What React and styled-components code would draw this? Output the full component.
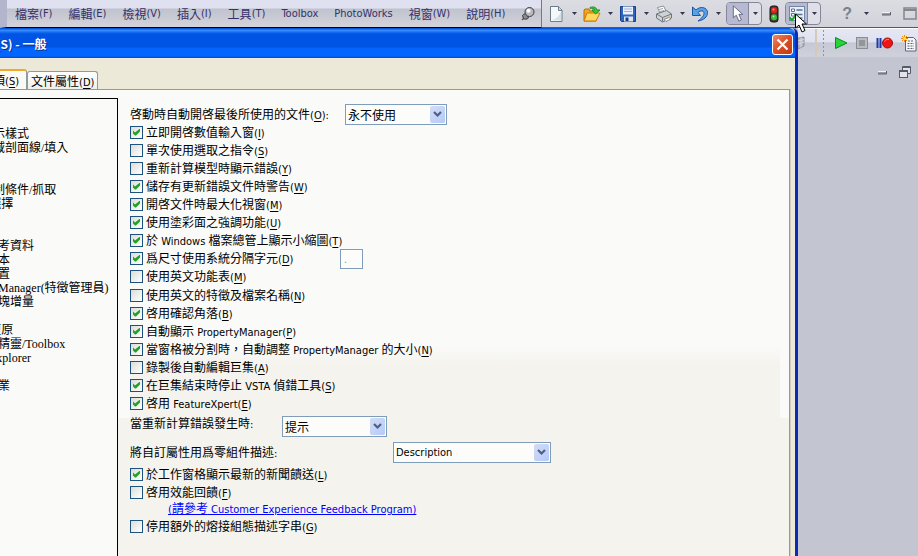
import React from 'react';
import styled, { createGlobalStyle, css } from 'styled-components';

// data
const MENUS = [
	'檔案(F)',
	'編輯(E)',
	'檢視(V)',
	'插入(I)',
	'工具(T)',
	'Toolbox',
	'PhotoWorks',
	'視窗(W)',
	'說明(H)',
];

const PAGES = [
	{ name: '一般' },
	{ name: '工程圖' },
	{ name: '顯示樣式', sub: true },
	{ name: '區域剖面線/填入', sub: true },
	{ name: '色彩' },
	{ name: '草圖' },
	{ name: '限制條件/抓取', sub: true },
	{ name: '顯示/選擇' },
	{ name: '效能' },
	{ name: '組合件' },
	{ name: '外部參考資料' },
	{ name: '預設範本' },
	{ name: '檔案位置' },
	{ name: 'FeatureManager(特徵管理員)' },
	{ name: '微調方塊增量' },
	{ name: '視角' },
	{ name: '備份/復原' },
	{ name: '異型孔精靈/Toolbox' },
	{ name: '檔案 Explorer' },
	{ name: '搜尋' },
	{ name: '協同作業' },
];

// & marks the access key
const STARTUP_CHECKS = [
	{ id: 'input-dim', text: '立即開啓數值輸入窗(&I)', on: true },
	{ id: 'single-cmd', text: '單次使用選取之指令(&S)' },
	{ id: 'rebuild-err', text: '重新計算模型時顯示錯誤(&Y)' },
	{ id: 'save-warn', text: '儲存有更新錯誤文件時警告(&W)', on: true },
	{ id: 'maximize', text: '開啓文件時最大化視窗(&M)', on: true },
	{ id: 'shaded', text: '使用塗彩面之強調功能(&U)', on: true },
	{ id: 'thumbs', text: '於 Windows 檔案總管上顯示小縮圖(&T)', on: true },
];

const LANGUAGE_CHECKS = [
	{ id: 'en-names', text: '使用英文的特徵及檔案名稱(&N)' },
	{ id: 'corner', text: '啓用確認角落(&B)', on: true },
	{ id: 'auto-pm', text: '自動顯示 PropertyManager(&P)', on: true },
	{
		id: 'size-pm',
		text: '當窗格被分割時，自動調整 PropertyManager 的大小(&N)',
		on: true,
	},
	{ id: 'edit-macro', text: '錄製後自動編輯巨集(&A)' },
	{ id: 'vsta', text: '在巨集結束時停止 VSTA 偵錯工具(&S)', on: true },
	{ id: 'xpert', text: '啓用 FeatureXpert(&E)', on: true },
];

// splits a caption into chinese text, latin text and the underlined access key
const Caption = ({ text }) =>
	text
		.split(/(&[A-Z]|[\x20-\x25\x27-\x7e]+)/)
		.filter(Boolean)
		.map((part, i) => {
			if (part[0] === '&') {
				return <Key key={i}>{part[1]}</Key>;
			}
			return /^[\x20-\x7e]/.test(part) ? <Latin key={i}>{part}</Latin> : part;
		});

const Check = ({ id, text, on }) => (
	<CheckRow>
		<CheckBox id={id} defaultChecked={on} />
		<CheckLabel htmlFor={id}>
			<Caption text={text} />
		</CheckLabel>
	</CheckRow>
);

const Select = ({ id, value, w, latin }) => (
	<SelectWrap $w={w}>
		<SelectBox id={id} $latin={latin} defaultValue={value}>
			<option>{value}</option>
		</SelectBox>
		<SelectArrow>
			<svg width='9' height='7' viewBox='0 0 9 7'>
				<path d='M1 1l3.500 3.500L8 1' fill='none' stroke='#4d6185' strokeWidth='2.200' />
			</svg>
		</SelectArrow>
	</SelectWrap>
);

// icons
const PinIcon = () => (
	<svg width='14' height='16' viewBox='0 0 14 16'>
		<path d='M1 14l4-4' stroke='#555' strokeWidth='1.500' />
		<path d='M1.500 9.500c1-1.500 2.500-2 4-1.500l2 4c-1.500 1.500-4 1.500-5 .500z' fill='#8b8b90' stroke='#3c3c40' />
		<circle cx='8.500' cy='6' r='4.500' fill='#b9b9be' stroke='#3c3c40' />
		<circle cx='7.500' cy='4.800' r='2' fill='#fff' />
	</svg>
);

const NewIcon = () => (
	<svg width='20' height='18' viewBox='0 0 20 18'>
		<path d='M4.500 1.500h8l3.500 3.500v11.500h-11.500z' fill='#f4f8fb' stroke='#6d7c8a' />
		<path d='M12.500 1.500v4h3.500' fill='#cfdbe4' stroke='#6d7c8a' />
		<path d='M6 15c4-1 7-4 9-8v8.500z' fill='#d5e1e9' />
	</svg>
);

const OpenIcon = () => (
	<svg width='20' height='18' viewBox='0 0 20 18'>
		<path d='M2 5l1-1h4l1 2h6v10h-12z' fill='#f2a81d' stroke='#bd6b0b' />
		<path d='M2 16l3-8h13l-4 8z' fill='#ffd75a' stroke='#c97b10' />
		<path d='M8 2.500c4-1.500 6.500 0 7 2.500h3l-4.500 4-3.500-4h2.500c-.500-1.500-2-2-4.500-1.500z' fill='#3cc53c' stroke='#148214' strokeWidth='.800' />
	</svg>
);

const SaveIcon = () => (
	<svg width='20' height='18' viewBox='0 0 20 18'>
		<path d='M2.500 1.500h15v15h-14l-1-1z' fill='#2f65bd' stroke='#173f8c' />
		<path d='M5 1.500h10v8h-10z' fill='#eaf1fa' />
		<path d='M6 4h8M6 6.500h8' stroke='#9db4d6' />
		<path d='M6 11.500h9v5h-9z' fill='#dfe5ee' />
		<path d='M7.500 12.500h3v3.500h-3z' fill='#173f8c' />
	</svg>
);

const PrintIcon = () => (
	<svg width='20' height='18' viewBox='0 0 20 18'>
		<path d='M3.500 2.500l6-1.500 3 6-6 2z' fill='#fff' stroke='#8b929b' />
		<path d='M5 4.500l4-1M6 6.500l4-1' stroke='#9ba3ac' />
		<path d='M2.500 9l10-3.500 5 3.500v4l-9 4-6-4z' fill='#ced2d7' stroke='#6e757e' />
		<path d='M2.500 9l6 3.500 9-3.500M8.500 12.500v4' fill='none' stroke='#6e757e' />
		<path d='M10 14.500l5-2 2 1.500-5 2.500z' fill='#fff' stroke='#6a7078' strokeWidth='.800' />
		<path d='M14 12h2' stroke='#d8b62c' />
	</svg>
);

const UndoIcon = () => (
	<svg width='20' height='18' viewBox='0 0 20 18'>
		<path
			d='M2.500 2v8.500h8l-2.500-3c2.500-2.500 6-2 6 .800 0 2.700-2.500 5-6 7.700 6-1 9.500-4 9.500-8.500 0-5-7-7-11.500-2.500z'
			fill='#5aa2e6'
			stroke='#1d55a5'
		/>
	</svg>
);

const PointerIcon = ({ w = 14, h = 20, stroke = '#555a70' }) => (
	<svg width={w} height={h} viewBox='0 0 14 20'>
		<path d='M1.500 1v14l3.500-3 3 7 3-1.500-3-6.500h4.500z' fill='#fff' stroke={stroke} />
	</svg>
);

const LightIcon = () => (
	<svg width='10' height='18' viewBox='0 0 10 18'>
		<rect x='1' y='1' width='8' height='16' rx='2.500' fill='#3c3c3c' stroke='#151515' />
		<circle cx='5' cy='5.300' r='3' fill='#e6231d' />
		<circle cx='5' cy='12.300' r='3' fill='#35c52e' />
		<circle cx='4.500' cy='4.500' r='1' fill='#ff9a8f' />
		<circle cx='4.500' cy='11.500' r='1' fill='#a9f59c' />
	</svg>
);

const OptionsIcon = () => (
	<svg width='18' height='18' viewBox='0 0 18 18'>
		<rect x='1.500' y='1.500' width='15' height='14' fill='#e9eff7' stroke='#7286a5' />
		<path d='M3.500 4h3v2.500h-3zM3.500 8.500h3v2.500h-3z' fill='#fff' stroke='#5c7193' />
		<path d='M8.500 5h6M8.500 9.500h6M8.500 13h6' stroke='#5c7193' strokeWidth='1.300' />
		<path d='M1.500 12.500l2.500 2.500 5-6' fill='none' stroke='#1faa28' strokeWidth='2' />
	</svg>
);

const DownIcon = () => (
	<svg width='5' height='3' viewBox='0 0 5 3'>
		<path d='M0 0h5l-2.500 3z' fill='#35364a' />
	</svg>
);

const MinIcon = () => (
	<svg width='10' height='5' viewBox='0 0 10 5'>
		<rect x='1' y='1' width='8' height='3' fill='#9a9ca6' />
		<path d='M1 1.500h8' stroke='#f1f2f6' />
		<path d='M1 4h8.500V1' fill='none' stroke='#5f626e' />
	</svg>
);

const MaxIcon = () => (
	<svg width='14' height='13' viewBox='0 0 14 13'>
		<rect x='1' y='1' width='12' height='11' fill='none' stroke='#84868c' strokeWidth='1.500' />
		<path d='M1 3h12' stroke='#84868c' strokeWidth='2' />
	</svg>
);

const RestoreIcon = () => (
	<svg width='14' height='14' viewBox='0 0 14 14'>
		<path d='M4.500 5v-3.500h8v7h-3' fill='#e2e4ea' stroke='#565b68' />
		<path d='M4.500 2.500h8' stroke='#565b68' />
		<rect x='1.500' y='5.500' width='8' height='7' fill='#e2e4ea' stroke='#565b68' />
		<path d='M1.500 6.500h8' stroke='#565b68' />
	</svg>
);

const CubeIcon = () => (
	<svg width='8' height='14' viewBox='0 0 8 14'>
		<path d='M0 2l6-1v9l-6 3z' fill='#b5b7c0' stroke='#8f919b' />
		<path d='M0 5l6-1.500M0 8l6-2M3 1.500v10' stroke='#d8d9e0' />
	</svg>
);

const PlayIcon = () => (
	<svg width='14' height='14' viewBox='0 0 14 14'>
		<path d='M1.500 1.500l11.500 5.500-11.500 5.500z' fill='#25d43a' stroke='#0e8a1e' />
	</svg>
);

const StopIcon = () => (
	<svg width='12' height='12' viewBox='0 0 12 12'>
		<rect x='.500' y='.500' width='11' height='11' fill='#b9bbc0' stroke='#8b8d93' />
		<rect x='3' y='3' width='6' height='6' fill='#94969b' />
	</svg>
);

const RecordIcon = () => (
	<svg width='17' height='12' viewBox='0 0 17 12'>
		<path d='M1.500 1v10M4.500 1v10' stroke='#1d3bb0' strokeWidth='2' />
		<circle cx='11.500' cy='6' r='5' fill='#ee1515' stroke='#9c0b0b' />
		<path d='M8.500 4.500c1-2 3-2.500 4.500-2' fill='none' stroke='#ff8c80' />
	</svg>
);

const MacroIcon = () => (
	<svg width='16' height='17' viewBox='0 0 16 17'>
		<path d='M4.500 2.500h8l2.500 2.500v11h-10.500z' fill='#f3f5f9' stroke='#5e6674' />
		<path d='M7 6h5M6.500 8.500h6.500M6.500 11h6.500M6.500 13.500h6.500' stroke='#5e6674' strokeDasharray='2 1' />
		<path d='M3.500 0v7M0 3.500h7M1 1l5 5M6 1l-5 5' stroke='#f28a12' />
		<circle cx='3.500' cy='3.500' r='1.500' fill='#fff04a' />
	</svg>
);

const CloseIcon = () => (
	<svg width='13' height='13' viewBox='0 0 13 13'>
		<path d='M1.500 1.500l10 10M11.500 1.500l-10 10' stroke='#fff' strokeWidth='2.200' />
	</svg>
);

const TOOLS = [
	{ label: '開新檔案', Icon: NewIcon },
	{ label: '開啓舊檔', Icon: OpenIcon },
	{ label: '儲存檔案', Icon: SaveIcon },
	{ label: '列印', Icon: PrintIcon },
	{ label: '復原', Icon: UndoIcon },
];

const App = () => {
	return (
		<Window>
			<GlobalStyle />
			<TopBar>
				<MenuBar>
					{MENUS.map((menu) => (
						<MenuButton key={menu}>
							<Caption text={menu} />
						</MenuButton>
					))}
					<MenuButton aria-label='固定'>
						<PinIcon />
					</MenuButton>
				</MenuBar>
				<Toolbar>
					{TOOLS.map(({ label, Icon }) => (
						<Tool key={label}>
							<ToolButton aria-label={label}>
								<Icon />
							</ToolButton>
							<DropButton aria-label={`${label} 選單`}>
								<DownIcon />
							</DropButton>
						</Tool>
					))}
					<SplitTool>
						<SplitMain aria-label='選擇'>
							<PointerIcon w={12} h={17} />
						</SplitMain>
						<SplitDrop aria-label='選擇 選單'>
							<DownIcon />
						</SplitDrop>
					</SplitTool>
					<LightButton aria-label='重新計算'>
						<LightIcon />
					</LightButton>
					<SplitTool>
						<SplitMain aria-label='選項'>
							<OptionsIcon />
						</SplitMain>
						<SplitDrop aria-label='選項 選單'>
							<DownIcon />
						</SplitDrop>
						<MouseCursor>
							<PointerIcon stroke='#000' />
						</MouseCursor>
					</SplitTool>
					<WindowTools>
						<HelpButton>?</HelpButton>
						<ToolButton aria-label='說明選單'>
							<DownIcon />
						</ToolButton>
						<ToolButton aria-label='最小化'>
							<MinIcon />
						</ToolButton>
						<ToolButton aria-label='最大化'>
							<MaxIcon />
						</ToolButton>
					</WindowTools>
				</Toolbar>
			</TopBar>

			<Body>
				<Dialog>
					<TitleBar>
						<Title>系統選項(S) - 一般</Title>
						<CloseButton aria-label='關閉'>
							<CloseIcon />
						</CloseButton>
					</TitleBar>
					<Tabs>
						<Tab $active>
							<Caption text='系統選項(&S)' />
						</Tab>
						<Tab>
							<Caption text='文件屬性(&D)' />
						</Tab>
					</Tabs>
					<Pane>
						<PageList>
							{PAGES.map(({ name, sub }) => (
								<PageItem key={name} $sub={sub}>
									{name}
								</PageItem>
							))}
						</PageList>
						<Form>
							<Field $h='19px' $labelWidth='215px'>
								<FieldLabel htmlFor='open-last'>
									<Caption text='啓動時自動開啓最後所使用的文件(&O):' />
								</FieldLabel>
								<Select id='open-last' value='永不使用' w='102px' />
							</Field>
							{STARTUP_CHECKS.map((item) => (
								<Check key={item.id} {...item} />
							))}
							<Field $h='18px' $labelWidth='210px'>
								<Check id='separator' text='爲尺寸使用系統分隔字元(&D)' on />
								<SeparatorInput aria-label='分隔字元' defaultValue='.' disabled />
							</Field>
							<Check id='en-menu' text='使用英文功能表(&M)' />
							<CheckGroup>
								{LANGUAGE_CHECKS.map((item) => (
									<Check key={item.id} {...item} />
								))}
							</CheckGroup>
							<Field $h='26px' $labelWidth='152px' $top='4px'>
								<FieldLabel htmlFor='on-error' $tight>
									<Caption text='當重新計算錯誤發生時:' />
								</FieldLabel>
								<Select id='on-error' value='提示' w='105px' />
							</Field>
							<Field $h='23px' $labelWidth='263px'>
								<FieldLabel htmlFor='custom-prop'>
									<Caption text='將自訂屬性用爲零組件描述:' />
								</FieldLabel>
								<Select id='custom-prop' value='Description' w='158px' latin />
							</Field>
							<Check id='news' text='於工作窗格顯示最新的新聞饋送(&L)' on />
							<Check id='feedback' text='啓用效能回饋(&F)' />
							<LinkRow>
								<ProgramLink href='#feedback-program'>
									<Caption text='(請參考 Customer Experience Feedback Program)' />
								</ProgramLink>
							</LinkRow>
							<Check id='weld' text='停用額外的熔接組態描述字串(&G)' />
						</Form>
					</Pane>
				</Dialog>

				<Workspace>
					<MacroBar>
						<CubeIcon />
						<Grip />
						<ToolButton aria-label='執行'>
							<PlayIcon />
						</ToolButton>
						<ToolButton aria-label='停止'>
							<StopIcon />
						</ToolButton>
						<ToolButton aria-label='錄製'>
							<RecordIcon />
						</ToolButton>
						<ToolButton aria-label='新巨集'>
							<MacroIcon />
						</ToolButton>
					</MacroBar>
					<DocTools>
						<ToolButton aria-label='最小化文件'>
							<MinIcon />
						</ToolButton>
						<ToolButton aria-label='還原文件'>
							<RestoreIcon />
						</ToolButton>
					</DocTools>
				</Workspace>
			</Body>
		</Window>
	);
};

const latinFont = css`
	font-family: 'DejaVu Sans Condensed', 'Noto Sans CJK TC', sans-serif;
	font-size: 11px;
`;

const GlobalStyle = createGlobalStyle`
	* {
		box-sizing: border-box;
	}

	body {
		margin: 0;
		font-family: 'Noto Sans CJK TC', sans-serif;
		font-size: 12px;
		line-height: 18px;
		color: #000;
	}

	button {
		margin: 0;
		padding: 0;
		border: 0;
		background: none;
		font: inherit;
		color: inherit;
	}

	svg {
		display: block;
	}
`;

const Window = styled.div`
	display: flex;
	flex-direction: column;
	height: 100vh;
	overflow: hidden;
	background: #c3c6d1;
	white-space: nowrap;
`;

const Latin = styled.span`
	${latinFont}
	white-space: pre;
`;

const Key = styled.span`
	${latinFont}
	text-decoration: underline;
	text-underline-offset: 2px;
`;

const TopBar = styled.header`
	display: flex;
	height: 28px;
	flex: none;
`;

const MenuBar = styled.nav`
	display: flex;
	align-items: center;
	gap: 16px;
	padding: 0 6px 0 8px;
	border-left: 7px solid #b3b5cc;
	border-right: 1px solid #77798a;
	border-bottom: 1px solid #000;
	background: linear-gradient(#dfe1f0 8px, #c0c2ce 9px, #d3d4da);
	color: #33316b;
`;

const MenuButton = styled.button`
	display: flex;
	align-items: center;
`;

const Toolbar = styled.div`
	display: flex;
	flex: 1;
	align-items: center;
	padding: 0 1px 0 4px;
	border-bottom: 1px solid #55565e;
	background: linear-gradient(#dcdde3, #d2d3da);
`;

const Tool = styled.div`
	display: flex;
`;

const ToolButton = styled.button`
	display: flex;
	align-items: center;
	justify-content: center;
`;

const DropButton = styled(ToolButton)`
	width: 16px;
`;

const SplitTool = styled.div`
	position: relative;
	display: flex;
	width: 36px;
	height: 23px;
	border: 1px solid #85869a;
	border-radius: 4px;
	background: #dfe0e7;
`;

const SplitMain = styled(ToolButton)`
	width: 22px;
	border-right: 1px solid #85869a;
	border-radius: 3px 0 0 3px;
	background: #b7b9d2;
`;

const SplitDrop = styled(ToolButton)`
	flex: 1;
`;

const LightButton = styled(ToolButton)`
	width: 23px;
`;

const MouseCursor = styled.span`
	position: absolute;
	top: 10px;
	left: 8px;
	z-index: 2;
	pointer-events: none;
`;

const WindowTools = styled.div`
	display: flex;
	align-items: center;
	gap: 12px;
	margin-left: auto;
`;

const HelpButton = styled(ToolButton)`
	font-family: 'Liberation Sans', sans-serif;
	font-size: 16px;
	font-weight: 700;
	color: #7d7f89;
`;

const Body = styled.div`
	display: flex;
	flex: 1;
	min-height: 0;
`;

/* dragged partly past the left edge of the screen */
const Dialog = styled.section`
	display: flex;
	flex: 1;
	flex-direction: column;
	margin-left: -60px;
	border-right: 3px solid #0a2bb5;
	border-radius: 0 6px 0 0;
	background: #ece9d8;
`;

const TitleBar = styled.div`
	display: flex;
	align-items: center;
	justify-content: space-between;
	height: 30px;
	padding: 2px 2px 0 8px;
	border-radius: 0 6px 0 0;
	background: linear-gradient(
		#0a54d8 1px,
		#3a92ff 2px,
		#0a62ee 5px,
		#0054e3 6px,
		#0054e3 19px,
		#0066ff 20px,
		#0066ff 28px,
		#0048c8
	);
`;

const Title = styled.h1`
	margin: 0;
	font-size: 12px;
	font-weight: 700;
	color: #fff;
	text-shadow: 1px 1px #0a2f8a;
`;

const CloseButton = styled(ToolButton)`
	width: 21px;
	height: 21px;
	border: 1px solid #fff;
	border-radius: 3px;
	background: linear-gradient(135deg, #ee8a6c, #dc4d24 50%, #c23c12);
`;

const Tabs = styled.div`
	display: flex;
	align-items: flex-end;
	height: 31px;
	padding-left: 9px;
`;

const Tab = styled.button`
	height: 18px;
	padding: 0 3px;
	border: 1px solid #919b9c;
	border-bottom: 0;
	border-radius: 3px 3px 0 0;
	background: linear-gradient(#fff, #f0f0ea);

	${({ $active }) =>
		$active &&
		css`
			height: 20px;
			padding: 0 7px;
			border-top: 2px solid #f5a72a;
			background: #fafaf8;
		`}
`;

const Pane = styled.div`
	display: flex;
	flex: 1;
	margin-right: 5px;
	padding: 8px 0 0 13px;
	border: 1px solid #919b9c;
	border-bottom: 0;
	background: #fafaf8;
	box-shadow: 1px 0 #d0cec0;
`;

const PageList = styled.ul`
	width: 164px;
	margin: 0;
	padding: 0 0 0 7px;
	border: 1px solid #000;
	border-bottom: 0;
	list-style: none;
	font-family: 'Liberation Serif', 'Noto Sans CJK TC', serif;
`;

const PageItem = styled.li`
	height: 14px;
	padding-left: ${({ $sub }) => ($sub ? '19px' : '0')};
	line-height: 14px;
`;

const Form = styled.form`
	flex: 1;
	padding: 6px 9px 0 12px;
	background:
		linear-gradient(#fafaf8 241px, #f4f3ee 262px) content-box,
		linear-gradient(#fafaf8 320px, #f4f3ee 320px);
`;

const Field = styled.div`
	display: grid;
	grid-template-columns: ${({ $labelWidth }) => $labelWidth} auto;
	justify-content: start;
	align-items: start;
	height: ${({ $h }) => $h};
	margin-top: ${({ $top }) => $top || '0'};
`;

const FieldLabel = styled.label`
	line-height: ${({ $tight }) => ($tight ? '14px' : '20px')};
`;

const CheckGroup = styled.div`
	padding-top: 1px;
`;

const CheckRow = styled.div`
	display: flex;
	align-items: center;
	gap: 3px;
	height: 18px;
`;

const CheckLabel = styled.label`
	padding-top: 2px;
`;

const CheckBox = styled.input.attrs({ type: 'checkbox' })`
	appearance: none;
	display: grid;
	place-items: center;
	width: 13px;
	height: 13px;
	margin: 0;
	border: 1px solid #1c5180;
	background: linear-gradient(135deg, #dcdcd7, #fff);

	&:checked::after {
		content: '';
		width: 7px;
		height: 7px;
		background: #21a121;
		clip-path: polygon(0 2px, 2px 4px, 7px 0, 7px 3px, 3px 7px, 2px 7px, 0 5px);
	}
`;

const SelectWrap = styled.div`
	position: relative;
	width: ${({ $w }) => $w};
	height: 21px;
`;

const SelectBox = styled.select`
	appearance: none;
	width: 100%;
	height: 100%;
	padding: 0 18px 0 2px;
	border: 1px solid #7f9db9;
	border-radius: 0;
	background: #fcfcfa;
	color: #000;
	font-family: inherit;
	font-size: 12px;
	${({ $latin }) => $latin && latinFont}
`;

const SelectArrow = styled.span`
	position: absolute;
	top: 2px;
	right: 2px;
	display: flex;
	align-items: center;
	justify-content: center;
	width: 15px;
	height: 17px;
	border-radius: 2px;
	background: linear-gradient(135deg, #d3dcf5, #b5cafa);
	pointer-events: none;
`;

const SeparatorInput = styled.input`
	width: 23px;
	height: 20px;
	padding: 0 3px;
	border: 1px solid #7f9db9;
	background: #fcfcfa;
	color: #b08a70;
	${latinFont}
`;

const LinkRow = styled.p`
	height: 16px;
	margin: 0;
	padding-left: 38px;
	line-height: 14px;
`;

const ProgramLink = styled.a`
	color: #0000ff;
`;

const Workspace = styled.aside`
	width: 120px;
`;

const MacroBar = styled.div`
	display: flex;
	align-items: center;
	gap: 8px;
	height: 29px;
	border-top: 1px solid #fff;
	background: linear-gradient(#e6e7f5, #dfe1ee 45%, #c6c8d6 50%, #cfd1da);
`;

const Grip = styled.span`
	width: 10px;
	height: 28px;
	margin: 0 1px;
	border-left: 2px solid #d8c8b8;
	background: radial-gradient(circle, #8f92a3 1px, transparent 1px) 5px 0 / 3px 4px repeat-y;
`;

const DocTools = styled.div`
	display: flex;
	align-items: center;
	justify-content: flex-end;
	gap: 11px;
	padding: 8px 6px;
`;

export default App;
